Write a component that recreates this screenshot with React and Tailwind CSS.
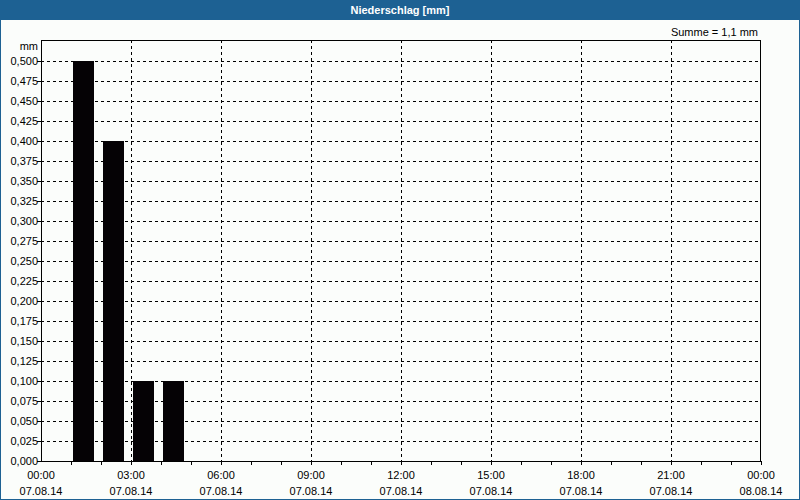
export default function App() {
  const L = 41, T = 40, R = 761, B = 461;
  const ys = Array.from({ length: 21 }, (_, i) => i);
  const xs = Array.from({ length: 9 }, (_, i) => i);
  const ticks = Array.from({ length: 24 }, (_, i) => i + 1);
  const bars = [[73, 0.5], [103, 0.4], [133, 0.1], [163, 0.1]];
  const times = ["00:00","03:00","06:00","09:00","12:00","15:00","18:00","21:00","00:00"];
  return (
    <div className="w-[800px] h-[500px] flex flex-col bg-[#1d6193]" style={{ fontFamily: '"Liberation Sans", Arial, sans-serif' }}>
      <div className="h-[20px] flex items-center justify-center text-white text-[11px] font-bold">Niederschlag [mm]</div>
      <div className="flex-1 mx-[1px] mb-[1px] bg-[#fbfdfb]">
        <svg width="798" height="479" viewBox="1 20 798 479" className="block" fontSize="11" fill="#000">
          <text x={758} y={36} textAnchor="end">Summe = 1,1 mm</text>
          <text x={38} y={50} textAnchor="end">mm</text>
          {ys.map(i => {
            const y = B - i * 20;
            return (
              <g key={i}>
                {i > 0 && <line x1={L} x2={R} y1={y + 0.5} y2={y + 0.5} stroke="#000" strokeDasharray="3 3" />}
                <line x1={L - 4} x2={L} y1={y + 0.5} y2={y + 0.5} stroke="#000" />
                <text x={38} y={y + 4} textAnchor="end">{(i * 0.025).toFixed(3).replace(".", ",")}</text>
              </g>
            );
          })}
          {xs.map(i => {
            const x = L + i * 90;
            return (
              <g key={i}>
                {i > 0 && i < 8 && <line x1={x + 0.5} x2={x + 0.5} y1={T} y2={B} stroke="#000" strokeDasharray="3 3" />}
                <text x={x} y={479} textAnchor="middle">{times[i]}</text>
                <text x={x} y={495} textAnchor="middle">{i === 8 ? "08.08.14" : "07.08.14"}</text>
              </g>
            );
          })}
          {ticks.map(i => (
            <line key={i} x1={L + i * 30 + 0.5} x2={L + i * 30 + 0.5} y1={B} y2={B + 4} stroke="#000" />
          ))}
          {bars.map(([x, v]) => (
            <rect key={x} x={x} y={B - v * 800} width={21} height={v * 800} fill="#050205" />
          ))}
          <rect x={L + 0.5} y={T + 0.5} width={R - L - 1} height={B - T} fill="none" stroke="#000" />
        </svg>
      </div>
    </div>
  );
}
